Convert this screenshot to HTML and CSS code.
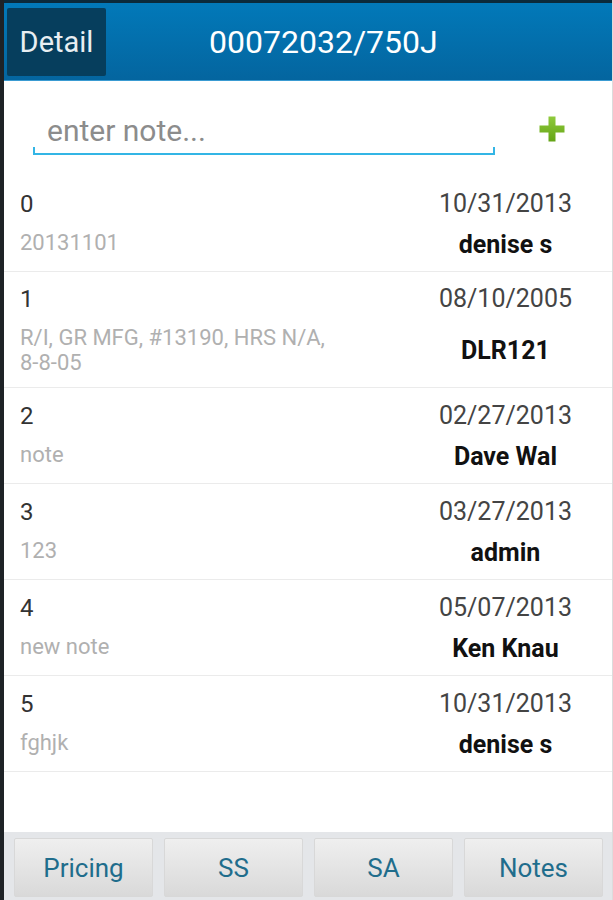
FILE: index.html
```html
<!DOCTYPE html>
<html>

<head>
    <link rel="stylesheet" href="styles.css">
</head>

<body>
    <div class="screen">
        <div class="topbar">
            <div class="back">Detail</div>
            <div class="title">00072032/750J</div>
        </div>

        <div class="noteform">
            <div class="field">
                <input type="text" class="noteinput" placeholder="enter note...">
            </div>
            <div class="addbtn">
                <svg width="28" height="28" viewBox="0 0 28 28">
                    <defs>
                        <linearGradient id="grn" x1="0" y1="0" x2="0" y2="1">
                            <stop offset="0" stop-color="#8fca3c" />
                            <stop offset="1" stop-color="#64a416" />
                        </linearGradient>
                    </defs>
                    <path d="M10.5 1.5h7v9h9v7h-9v9h-7v-9h-9v-7h9z" fill="url(#grn)" />
                </svg>
            </div>
        </div>

        <ul class="notes">
            <li class="note">
                <span class="num">0</span>
                <span class="date">10/31/2013</span>
                <span class="text">20131101</span>
                <span class="user">denise s</span>
            </li>
            <li class="note">
                <span class="num">1</span>
                <span class="date">08/10/2005</span>
                <span class="text">R/I, GR MFG, #13190, HRS N/A,<br>8-8-05</span>
                <span class="user">DLR121</span>
            </li>
            <li class="note">
                <span class="num">2</span>
                <span class="date">02/27/2013</span>
                <span class="text">note</span>
                <span class="user">Dave Wal</span>
            </li>
            <li class="note">
                <span class="num">3</span>
                <span class="date">03/27/2013</span>
                <span class="text">123</span>
                <span class="user">admin</span>
            </li>
            <li class="note">
                <span class="num">4</span>
                <span class="date">05/07/2013</span>
                <span class="text">new note</span>
                <span class="user">Ken Knau</span>
            </li>
            <li class="note">
                <span class="num">5</span>
                <span class="date">10/31/2013</span>
                <span class="text">fghjk</span>
                <span class="user">denise s</span>
            </li>
        </ul>

        <div class="tabs">
            <button class="tab">Pricing</button>
            <button class="tab">SS</button>
            <button class="tab">SA</button>
            <button class="tab">Notes</button>
        </div>
    </div>
</body>

</html>
```

FILE: styles.css
```css
body {
    margin: 0;
    font-family: Roboto, "Liberation Sans", sans-serif;
    background-color: #ffffff;
}

.screen {
    width: 613px;
    height: 900px;
    box-sizing: border-box;
    border-left: 4px solid #1e2226;
    border-right: 1px solid #dcdcdc;
    display: flex;
    flex-direction: column;
}

/* action bar */
.topbar {
    height: 81px;
    box-sizing: border-box;
    border-top: 3px solid #0b2a3b;
    border-bottom: 1px solid #3a9bd2;
    background: linear-gradient(#0279b9, #04659f);
    padding: 5px 0 4px 3px;
    display: flex;
    align-items: stretch;
}

.back {
    width: 99px;
    background-color: #063e5d;
    border-radius: 2px;
    color: #e8eef2;
    font-size: 29px;
    display: flex;
    align-items: center;
    justify-content: center;
}

.title {
    color: #ffffff;
    font-size: 32px;
    padding-left: 103px;
    display: flex;
    align-items: center;
}

/* note entry */
.noteform {
    height: 95px;
    display: flex;
    align-items: center;
    padding-left: 29px;
}

.field {
    width: 462px;
    margin-top: 10px;
    border-bottom: 2px solid #33b5e5;
    background:
        linear-gradient(#33b5e5, #33b5e5) left bottom / 2px 6px no-repeat,
        linear-gradient(#33b5e5, #33b5e5) right bottom / 2px 6px no-repeat;
}

.noteinput {
    border: none;
    outline: none;
    background: transparent;
    width: 100%;
    box-sizing: border-box;
    padding: 0 0 5px 14px;
    font-family: inherit;
    font-size: 30px;
    color: #333;
}

.noteinput::placeholder {
    color: #8c8c8c;
}

.addbtn {
    flex: 1;
    display: flex;
    justify-content: center;
    padding-right: 4px;
}

/* list */
.notes {
    list-style: none;
    margin: 0;
    padding: 0;
}

.note {
    min-height: 96px;
    box-sizing: border-box;
    padding: 12px 40px 12px 16px;
    border-bottom: 1px solid #ebebeb;
    display: grid;
    grid-template-columns: 1fr auto;
    row-gap: 11px;
    align-content: center;
}

.num {
    font-size: 24px;
    line-height: 30px;
    color: #333333;
}

.date {
    font-size: 25px;
    line-height: 30px;
    color: #444444;
}

.text {
    font-size: 22px;
    line-height: 25px;
    color: #b0b0b0;
}

.user {
    align-self: center;
    text-align: center;
    font-size: 25px;
    font-weight: bold;
    color: #111111;
}

/* bottom buttons */
.tabs {
    margin-top: auto;
    height: 68px;
    box-sizing: border-box;
    background-color: #e4e6e9;
    padding: 6px 9px 3px 10px;
    display: flex;
    gap: 11px;
}

.tab {
    flex: 1;
    border: 1px solid #d8d8d8;
    border-radius: 2px;
    background: linear-gradient(#efefef, #d9d9d9);
    font-family: inherit;
    font-size: 26px;
    color: #1f6d8c;
    padding: 0;
}
```
